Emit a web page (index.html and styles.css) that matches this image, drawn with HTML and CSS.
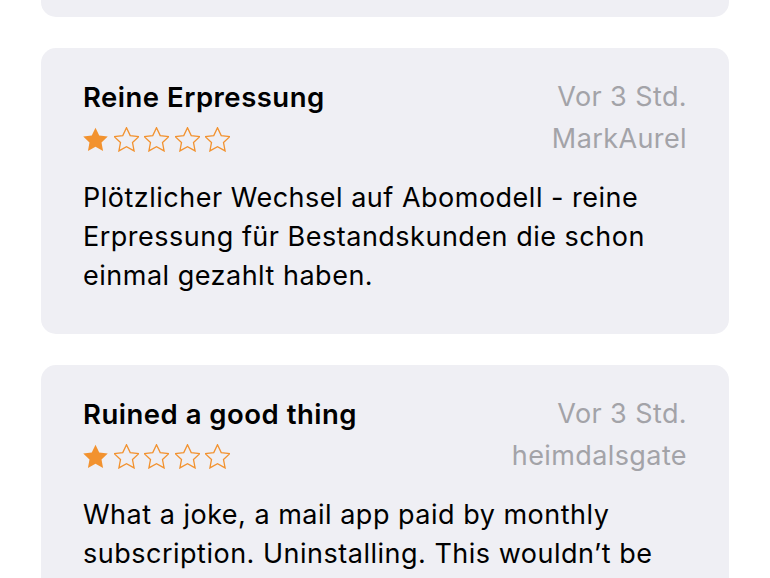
FILE: index.html
```html
<!DOCTYPE html>
<html lang="de">
<head>
<meta charset="utf-8">
<link rel="stylesheet" href="styles.css">
</head>
<body>
<div class="list">
  <div class="card card-top"></div>

  <div class="card">
    <div class="head">
      <div class="left">
        <div class="title">Reine Erpressung</div>
        <div class="stars">
          <svg class="star" viewBox="1.6 1.2 20.8 20.8"><path class="fill" d="M12 1.8l3.1 6.5 7.1.9-5.2 4.9 1.3 7L12 17.6l-6.3 3.5 1.3-7-5.2-4.9 7.1-.9z"/></svg>
          <svg class="star" viewBox="1.6 1.2 20.8 20.8"><path class="line" d="M12 1.8l3.1 6.5 7.1.9-5.2 4.9 1.3 7L12 17.6l-6.3 3.5 1.3-7-5.2-4.9 7.1-.9z"/></svg>
          <svg class="star" viewBox="1.6 1.2 20.8 20.8"><path class="line" d="M12 1.8l3.1 6.5 7.1.9-5.2 4.9 1.3 7L12 17.6l-6.3 3.5 1.3-7-5.2-4.9 7.1-.9z"/></svg>
          <svg class="star" viewBox="1.6 1.2 20.8 20.8"><path class="line" d="M12 1.8l3.1 6.5 7.1.9-5.2 4.9 1.3 7L12 17.6l-6.3 3.5 1.3-7-5.2-4.9 7.1-.9z"/></svg>
          <svg class="star" viewBox="1.6 1.2 20.8 20.8"><path class="line" d="M12 1.8l3.1 6.5 7.1.9-5.2 4.9 1.3 7L12 17.6l-6.3 3.5 1.3-7-5.2-4.9 7.1-.9z"/></svg>
        </div>
      </div>
      <div class="right">
        <div class="meta">Vor 3 Std.</div>
        <div class="meta">MarkAurel</div>
      </div>
    </div>
    <p class="body">Plötzlicher Wechsel auf Abomodell - reine Erpressung für Bestandskunden die schon einmal gezahlt haben.</p>
  </div>

  <div class="card">
    <div class="head">
      <div class="left">
        <div class="title">Ruined a good thing</div>
        <div class="stars">
          <svg class="star" viewBox="1.6 1.2 20.8 20.8"><path class="fill" d="M12 1.8l3.1 6.5 7.1.9-5.2 4.9 1.3 7L12 17.6l-6.3 3.5 1.3-7-5.2-4.9 7.1-.9z"/></svg>
          <svg class="star" viewBox="1.6 1.2 20.8 20.8"><path class="line" d="M12 1.8l3.1 6.5 7.1.9-5.2 4.9 1.3 7L12 17.6l-6.3 3.5 1.3-7-5.2-4.9 7.1-.9z"/></svg>
          <svg class="star" viewBox="1.6 1.2 20.8 20.8"><path class="line" d="M12 1.8l3.1 6.5 7.1.9-5.2 4.9 1.3 7L12 17.6l-6.3 3.5 1.3-7-5.2-4.9 7.1-.9z"/></svg>
          <svg class="star" viewBox="1.6 1.2 20.8 20.8"><path class="line" d="M12 1.8l3.1 6.5 7.1.9-5.2 4.9 1.3 7L12 17.6l-6.3 3.5 1.3-7-5.2-4.9 7.1-.9z"/></svg>
          <svg class="star" viewBox="1.6 1.2 20.8 20.8"><path class="line" d="M12 1.8l3.1 6.5 7.1.9-5.2 4.9 1.3 7L12 17.6l-6.3 3.5 1.3-7-5.2-4.9 7.1-.9z"/></svg>
        </div>
      </div>
      <div class="right">
        <div class="meta">Vor 3 Std.</div>
        <div class="meta">heimdalsgate</div>
      </div>
    </div>
    <p class="body">What a joke, a mail app paid by monthly subscription. Uninstalling. This wouldn’t be a problem if the app had stayed the same price as before.</p>
  </div>
</div>
</body>
</html>
```

FILE: styles.css
```css
html, body {
  margin: 0;
  padding: 0;
  background: #ffffff;
  overflow: hidden;
}
body {
  width: 770px;
  height: 578px;
  font-family: Inter, "Noto Sans", sans-serif;
  color: #000;
}
.list {
  padding: 0 41px;
  display: flex;
  flex-direction: column;
  gap: 31px;
}
.card {
  background: #efeff4;
  border-radius: 15px;
  padding: 33px 42px 39px;
}
.card-top {
  height: 100px;
  margin-top: -83px;
  padding: 0;
}
.head {
  display: flex;
  justify-content: space-between;
  align-items: flex-start;
}
.title {
  font-size: 27.5px;
  font-weight: 600;
  line-height: 32px;
  letter-spacing: 0.5px;
}
.stars {
  display: flex;
  gap: 5.5px;
  margin-top: 13.5px;
}
.star {
  width: 25px;
  height: 25px;
  display: block;
}
.fill {
  fill: #f2922f;
}
.line {
  fill: none;
  stroke: #f2922f;
  stroke-width: 1.1;
  stroke-linejoin: miter;
}
.right {
  text-align: right;
}
.meta {
  font-size: 27px;
  line-height: 32px;
  color: #a3a3a8;
  letter-spacing: 0.4px;
}
.meta + .meta {
  margin-top: 10px;
}
.body {
  margin: 23px 20px 0 0;
  font-size: 27px;
  line-height: 39px;
  letter-spacing: 0.5px;
}
```
